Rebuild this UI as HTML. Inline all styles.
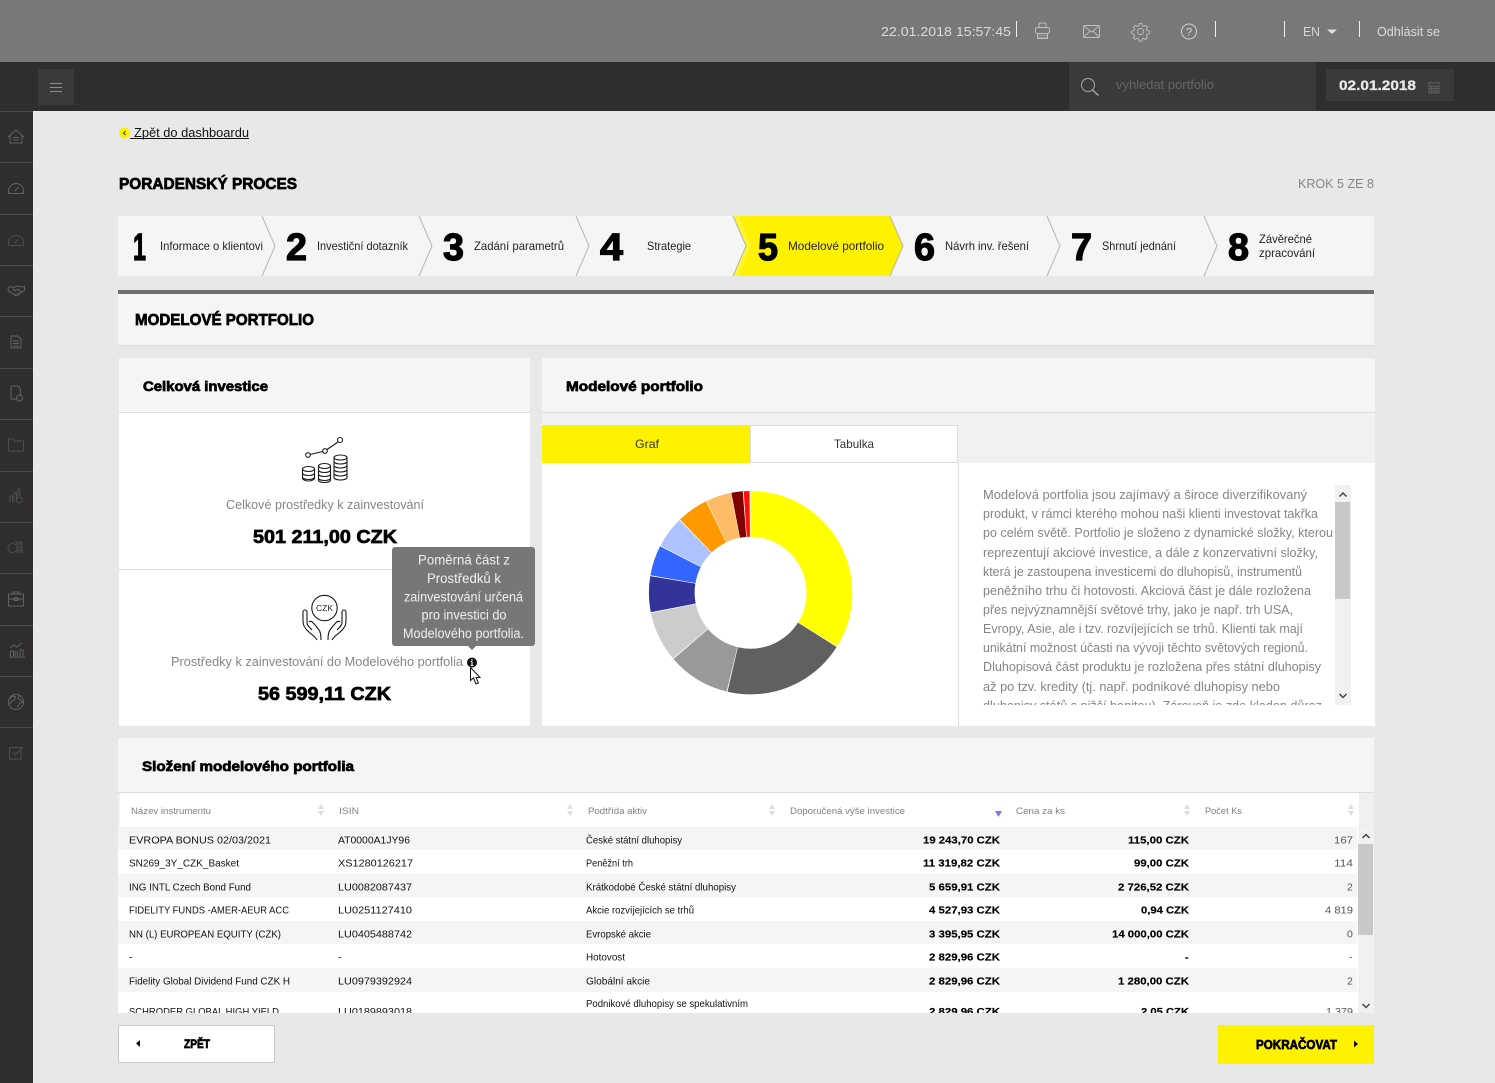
<!DOCTYPE html>
<html lang="cs"><head><meta charset="utf-8"><title>Modelové portfolio</title>
<style>
html,body{margin:0;padding:0;width:1495px;height:1083px;overflow:hidden;background:#e8e8e8}
svg{position:absolute;left:0;top:0;display:block}
text{font-family:"Liberation Sans",sans-serif;white-space:pre}
.h{font-weight:700;fill:#000;stroke:#000;stroke-width:.7}
.n{font-weight:700;fill:#000;font-size:38px;stroke:#000;stroke-width:1.2}
.l{font-size:12px;fill:#222}
.g{font-size:13px;fill:#858585}
.t{font-size:10.5px;fill:#111}
.b{font-size:10.5px;font-weight:700;fill:#000;stroke:#000;stroke-width:.15}
.q{font-size:10.5px;fill:#555}
.th{font-size:9.5px;fill:#808080}
.tt{font-size:13.5px;fill:#f0f0f0;text-anchor:middle}
.ic{fill:none;stroke:#636361;stroke-width:1}
.ic2{fill:none;stroke:#4e4e4c;stroke-width:1}
.top{fill:none;stroke:#c0c0c0;stroke-width:1}
.k{fill:none;stroke:#1a1a1a;stroke-width:1.1}
</style></head><body>
<svg width="1495" height="1083" viewBox="0 0 1495 1083" xmlns="http://www.w3.org/2000/svg">
<defs>
<clipPath id="cText"><rect x="975" y="485" width="360" height="220"/></clipPath>
<clipPath id="cTab"><rect x="118" y="827" width="1240" height="186"/></clipPath>
</defs>
<rect width="1495" height="1083" fill="#e8e8e8"/>
<!-- top -->
<rect width="1495" height="62" fill="#787878"/>
<rect y="62" width="1495" height="49" fill="#2f2e2c"/>
<rect y="111" width="33" height="972" fill="#2f2e2c"/>
<rect x="38" y="69" width="36" height="36" fill="#3a3a38"/>
<path d="M50 83.500h12M50 87.500h12M50 91.500h12" stroke="#8c8c8a" stroke-width="1"/>
<rect x="1069" y="62" width="247" height="49" fill="#3a3a38"/>
<rect x="1326" y="69" width="128" height="32" fill="#3a3a38"/>
<text x="881" y="36" font-size="13" fill="#dcdcdc" textLength="130" lengthAdjust="spacingAndGlyphs">22.01.2018 15:57:45</text>
<path d="M1016.500 21v16M1215.500 21v16M1284.500 21v16M1359.500 21v16" stroke="#eee" stroke-width="1"/>
<g class="top">
<path d="M1039 28v-3.500a1.500 1.500 0 0 1 1.500-1.500h4a1.500 1.500 0 0 1 1.500 1.500V28"/>
<rect x="1035.500" y="27.500" width="14" height="6" rx="2"/>
<path d="M1037.500 33.500v5h10v-5"/>
<path d="M1038 35.500h9M1038 37.500h9" stroke="#9c9c9c"/>
<rect x="1083.500" y="25.500" width="16" height="12" rx="1.500"/><path d="M1084 26l7.500 6 7.500-6M1084 37l6-6M1099 37l-6-6"/>
<g transform="translate(1140.500 31.500) scale(.88) translate(-1140.500 -31.500)"><circle cx="1140.500" cy="31.500" r="3.500"/><path d="M1139 22.500h3l.5 2.500 1.800.8 2-1.300 2.200 2.200-1.300 2 .8 1.800 2.500.5v3l-2.500.5-.8 1.800 1.300 2-2.200 2.200-2-1.300-1.800.8-.5 2.500h-3l-.5-2.500-1.800-.8-2 1.300-2.200-2.200 1.300-2-.8-1.800-2.500-.5v-3l2.500-.5.8-1.800-1.300-2 2.200-2.200 2 1.300 1.800-.8z"/></g>
<circle cx="1189" cy="31.500" r="7.500" stroke="#d4d4d4"/>
</g>
<text x="1189" y="35.500" font-size="11" fill="#d8d8d8" text-anchor="middle">?</text>
<text x="1303" y="36" font-size="13" fill="#d4d4d4" textLength="17" lengthAdjust="spacingAndGlyphs">EN</text>
<path d="M1327 29.500h10l-5 4.500z" fill="#e0e0e0"/>
<text x="1377" y="36" font-size="13" fill="#dcdcdc" textLength="63" lengthAdjust="spacingAndGlyphs">Odhlásit se</text>
<circle cx="1088" cy="85" r="6.500" fill="none" stroke="#a8a8a8" stroke-width="1"/><path d="M1092.500 90l6 5.500" stroke="#a8a8a8" stroke-width="1.500"/>
<text x="1116" y="89" font-size="13" fill="#676765" textLength="98" lengthAdjust="spacingAndGlyphs">vyhledat portfolio</text>
<text x="1339" y="90" font-size="13.500" font-weight="700" fill="#e8e8e8" stroke="#e8e8e8" stroke-width=".3" textLength="77" lengthAdjust="spacingAndGlyphs">02.01.2018</text>
<path d="M1429 83h10v10h-10zM1429 86h10M1431 81.500v2M1437 81.500v2M1431.500 86v7M1434 86v7M1436.500 86v7M1429 88.500h10M1429 91h10" stroke="#5e5e5c" stroke-width="1" fill="none"/>
<!-- side separators -->
<path d="M0 111.500h33M0 162.500h33M0 214.500h33M0 265.500h33M0 316.500h33M0 368.500h33M0 419.500h33M0 471.500h33M0 522.500h33M0 573.500h33M0 625.500h33M0 676.500h33M0 727.500h33" stroke="#4a4a48" stroke-width="1"/>
<g class="ic">
<path d="M8 137l8-7 8 7M10 135.500v7.500h12v-7.500M13 137.500h6M13 140h6"/>
<path d="M8.500 193v-2a7.500 7.500 0 0 1 15 0v2a1 1 0 0 1-1 .5h-13a1 1 0 0 1-1-.5zM14.500 191l4-3.500"/>
<path d="M8 288l3-1.500 3 1 2-1 2.500-.5 3 1 3-.5 0 4-3 1.500-4 3.500-2 0-4-3-3-1.500zM13 288.500l2 2.500 3-2 4 4M14 294l2 1.500M17 293l2 1.500"/>
<path d="M11 336h7l3 3v9H11zM13 341h6M13 343.500h6M13 346h6"/>
<path d="M11 386h7l2.500 3v6M17 399H11V386"/><circle cx="19.500" cy="398" r="3"/>
<rect x="8.500" y="594" width="15" height="12" rx="1"/><path d="M8.500 599h15M13 594v-2h6v2"/><rect x="14" y="598" width="4" height="2.500"/>
<path d="M9 657h16M10.500 656v-5h3v5M15 656v-4h2.500v4M20 656v-6h3v6M10 648l4-3 3 2 5-4"/>
<circle cx="16" cy="702" r="7.500"/><path d="M9.500 699l3-3 3 1-1 3-3 1-1 3M19 695.500l-1 3 3 1.500 1.500 2-3 1-1 3-1.500 1"/>
</g>
<g class="ic2">
<path d="M8.500 245v-2a7.500 7.500 0 0 1 15 0v2a1 1 0 0 1-1 .5h-13a1 1 0 0 1-1-.5zM14.500 243l4-3.500"/>
<path d="M8.500 439h5l1.500 2h8.500v10h-15z"/>
<path d="M10 502v-6h2.500v6M14 502v-9h2.500v9M18 496v-7h2v7"/><circle cx="19.500" cy="500" r="3"/>
<circle cx="12.500" cy="548" r="4.500"/><path d="M14 542h8v10h-6M16 544h6M17 547h5M17 550h5"/>
<path d="M9.500 747.500h11.500v11.500H9.500zM13 752l2.500 3 7.500-8"/>
</g>
<!-- back -->
<circle cx="124.500" cy="133" r="5.500" fill="#fff200"/><path d="M125.500 131l-2 2 2 2" fill="none" stroke="#333" stroke-width="1"/>
<text x="134" y="137" font-size="13" fill="#111" textLength="115" lengthAdjust="spacingAndGlyphs">Zpět do dashboardu</text>
<path d="M130 138.500h119" stroke="#111" stroke-width="1"/>
<text x="119" y="189" class="h" font-size="16" textLength="178" lengthAdjust="spacingAndGlyphs">PORADENSKÝ PROCES</text>
<text x="1298" y="188" font-size="13" fill="#858585" textLength="76" lengthAdjust="spacingAndGlyphs">KROK 5 ZE 8</text>
<!-- steps -->
<rect x="118" y="216" width="1256" height="60" fill="#f5f5f5"/>
<path d="M733 216h157l13 30-13 30H733l13-30z" fill="#fff200"/>
<path d="M733 216h6l12 30-12 30h-6l13-30z" fill="#fff430"/>
<g fill="none" stroke="#b5b5b5" stroke-width="1">
<path d="M262 216l13 30-13 30M419 216l13 30-13 30M576 216l13 30-13 30M733 216l13 30-13 30M890 216l13 30-13 30M1047 216l13 30-13 30M1204 216l13 30-13 30"/>
</g>
<text x="133" y="260" class="n" textLength="13" lengthAdjust="spacingAndGlyphs">1</text>
<text x="286" y="260" class="n" textLength="21" lengthAdjust="spacingAndGlyphs">2</text>
<text x="443" y="260" class="n" textLength="21" lengthAdjust="spacingAndGlyphs">3</text>
<text x="600" y="260" class="n" textLength="23" lengthAdjust="spacingAndGlyphs">4</text>
<text x="758" y="260" class="n" textLength="20" lengthAdjust="spacingAndGlyphs">5</text>
<text x="914" y="260" class="n" textLength="21" lengthAdjust="spacingAndGlyphs">6</text>
<text x="1071" y="260" class="n" textLength="21" lengthAdjust="spacingAndGlyphs">7</text>
<text x="1228" y="260" class="n" textLength="21" lengthAdjust="spacingAndGlyphs">8</text>
<text x="160" y="250" class="l" textLength="103" lengthAdjust="spacingAndGlyphs">Informace o klientovi</text>
<text x="317" y="250" class="l" textLength="91" lengthAdjust="spacingAndGlyphs">Investiční dotazník</text>
<text x="474" y="250" class="l" textLength="90" lengthAdjust="spacingAndGlyphs">Zadání parametrů</text>
<text x="647" y="250" class="l" textLength="44" lengthAdjust="spacingAndGlyphs">Strategie</text>
<text x="788" y="250" class="l" textLength="96" lengthAdjust="spacingAndGlyphs">Modelové portfolio</text>
<text x="945" y="250" class="l" textLength="84" lengthAdjust="spacingAndGlyphs">Návrh inv. řešení</text>
<text x="1102" y="250" class="l" textLength="74" lengthAdjust="spacingAndGlyphs">Shrnutí jednání</text>
<text x="1259" y="243" class="l" textLength="53" lengthAdjust="spacingAndGlyphs">Závěrečné</text>
<text x="1259" y="257" class="l" textLength="56" lengthAdjust="spacingAndGlyphs">zpracování</text>
<!-- section -->
<rect x="118" y="290" width="1256" height="4" fill="#6f6f6f"/>
<rect x="118" y="294" width="1256" height="51" fill="#f5f5f5"/>
<rect x="118" y="345" width="1256" height="1" fill="#dcdcdc"/>
<text x="135" y="325" class="h" font-size="16" textLength="179" lengthAdjust="spacingAndGlyphs">MODELOVÉ PORTFOLIO</text>
<!-- left panel -->
<rect x="119" y="358" width="411" height="368" fill="#fff"/>
<rect x="119" y="358" width="411" height="54" fill="#f5f5f5"/>
<rect x="119" y="412" width="411" height="1" fill="#dcdcdc"/>
<text x="143" y="391" class="h" font-size="13.500" textLength="125" lengthAdjust="spacingAndGlyphs">Celková investice</text>
<rect x="119" y="569" width="411" height="1" fill="#dcdcdc"/>
<!-- coins icon -->
<g class="k">
<path d="M310 454.500l13-3M327 449.500l11-7.500"/>
<circle cx="308" cy="455" r="2.300"/><circle cx="325" cy="451" r="2.300"/><circle cx="340" cy="440" r="2.500"/>
<ellipse cx="308.500" cy="469" rx="6" ry="2.500"/><path d="M302.500 469v9c0 1.500 2.500 3 6 3s6-1.500 6-3v-9M302.500 473c0 1.500 2.500 2.500 6 2.500s6-1 6-2.500M302.500 477c0 1.500 2.500 2.500 6 2.500s6-1 6-2.500"/>
<ellipse cx="324.500" cy="466" rx="6" ry="2.500"/><path d="M318.500 466v14c0 1.500 2.500 2.500 6 2.500s6-1 6-2.500v-14M318.500 470c0 1.500 2.500 2.500 6 2.500s6-1 6-2.500M318.500 474c0 1.500 2.500 2.500 6 2.500s6-1 6-2.500M318.500 478c0 1.500 2.500 2.500 6 2.500s6-1 6-2.500"/>
<ellipse cx="340.500" cy="457.500" rx="6.500" ry="2.500"/><path d="M334 457.500v20c0 1.500 3 2.500 6.500 2.500s6.500-1 6.500-2.500v-20M334 461.500c0 1.500 3 2.500 6.500 2.500s6.500-1 6.500-2.500M334 465.500c0 1.500 3 2.500 6.500 2.500s6.500-1 6.500-2.500M334 469.500c0 1.500 3 2.500 6.500 2.500s6.500-1 6.500-2.500M334 473.500c0 1.500 3 2.500 6.500 2.500s6.500-1 6.500-2.500"/>
</g>
<text x="226" y="509" class="g" textLength="198" lengthAdjust="spacingAndGlyphs">Celkové prostředky k zainvestování</text>
<text x="253" y="543" class="h" font-size="18.500" textLength="144" lengthAdjust="spacingAndGlyphs">501 211,00 CZK</text>
<!-- hands icon -->
<g class="k">
<circle cx="324.500" cy="608" r="12.700"/>
<path id="hand" d="M317 640C314 635 309 633 306 629C303.500 626 303 624 303 620V612a2 2 0 0 1 4 0V623C307 625 309 627 312 630M309 622C312 620 313 623 316 626L319 630C320.500 632 321 635 321 640"/>
<path transform="translate(649 0) scale(-1 1)" d="M317 640C314 635 309 633 306 629C303.500 626 303 624 303 620V612a2 2 0 0 1 4 0V623C307 625 309 627 312 630M309 622C312 620 313 623 316 626L319 630C320.500 632 321 635 321 640"/>
</g>
<text x="324.500" y="611" font-size="8.500" fill="#222" text-anchor="middle">CZK</text>
<text x="171" y="666" class="g" textLength="292" lengthAdjust="spacingAndGlyphs">Prostředky k zainvestování do Modelového portfolia</text>
<text x="258" y="700" class="h" font-size="18.500" textLength="133" lengthAdjust="spacingAndGlyphs">56 599,11 CZK</text>
<!-- right panel -->
<rect x="542" y="358" width="833" height="368" fill="#fff"/>
<rect x="542" y="358" width="833" height="105" fill="#f1f1f1"/>
<rect x="542" y="358" width="833" height="54" fill="#f5f5f5"/>
<rect x="542" y="412" width="833" height="1" fill="#dcdcdc"/>
<text x="566" y="391" class="h" font-size="13.500" textLength="137" lengthAdjust="spacingAndGlyphs">Modelové portfolio</text>
<rect x="542" y="425" width="208" height="38" fill="#fff200"/>
<rect x="750.500" y="425.500" width="207" height="37" fill="#fff" stroke="#dcdcdc"/>
<rect x="542" y="463" width="833" height="263" fill="#fff"/>
<text x="635" y="448" font-size="12" fill="#333" textLength="24" lengthAdjust="spacingAndGlyphs">Graf</text>
<text x="834" y="448" font-size="12" fill="#333" textLength="40" lengthAdjust="spacingAndGlyphs">Tabulka</text>
<rect x="958" y="463" width="1" height="263" fill="#dcdcdc"/>
<!-- donut -->
<g transform="translate(.6 .7) rotate(-90 750 592)" fill="none" stroke-width="45.700">
<circle cx="750" cy="592" r="78.850" pathLength="360" stroke="#ffff00" stroke-dasharray="122 360"/>
<circle cx="750" cy="592" r="78.850" pathLength="360" stroke="#606060" stroke-dasharray="71 360" stroke-dashoffset="-122.400"/>
<circle cx="750" cy="592" r="78.850" pathLength="360" stroke="#999999" stroke-dasharray="35.700 360" stroke-dashoffset="-193.900"/>
<circle cx="750" cy="592" r="78.850" pathLength="360" stroke="#cccccc" stroke-dasharray="28.600 360" stroke-dashoffset="-230.100"/>
<circle cx="750" cy="592" r="78.850" pathLength="360" stroke="#333399" stroke-dasharray="20.500 360" stroke-dashoffset="-259.200"/>
<circle cx="750" cy="592" r="78.850" pathLength="360" stroke="#3366ff" stroke-dasharray="17.300 360" stroke-dashoffset="-280.200"/>
<circle cx="750" cy="592" r="78.850" pathLength="360" stroke="#adc2ff" stroke-dasharray="17.900 360" stroke-dashoffset="-298"/>
<circle cx="750" cy="592" r="78.850" pathLength="360" stroke="#ff9900" stroke-dasharray="18 360" stroke-dashoffset="-316.400"/>
<circle cx="750" cy="592" r="78.850" pathLength="360" stroke="#ffbb66" stroke-dasharray="14.300 360" stroke-dashoffset="-334.800"/>
<circle cx="750" cy="592" r="78.850" pathLength="360" stroke="#800000" stroke-dasharray="6.500 360" stroke-dashoffset="-349.500"/>
<circle cx="750" cy="592" r="78.850" pathLength="360" stroke="#ff1010" stroke-dasharray="3.300 360" stroke-dashoffset="-356.500"/>
</g>
<!-- text block -->
<g clip-path="url(#cText)" class="g">
<text x="983" y="499" textLength="324" lengthAdjust="spacingAndGlyphs">Modelová portfolia jsou zajímavý a široce diverzifikovaný</text>
<text x="983" y="518" textLength="335" lengthAdjust="spacingAndGlyphs">produkt, v rámci kterého mohou naši klienti investovat takřka</text>
<text x="983" y="537" textLength="350" lengthAdjust="spacingAndGlyphs">po celém světě. Portfolio je složeno z dynamické složky, kterou</text>
<text x="983" y="557" textLength="335" lengthAdjust="spacingAndGlyphs">reprezentují akciové investice, a dále z konzervativní složky,</text>
<text x="983" y="576" textLength="319" lengthAdjust="spacingAndGlyphs">která je zastoupena investicemi do dluhopisů, instrumentů</text>
<text x="983" y="595" textLength="328" lengthAdjust="spacingAndGlyphs">peněžního trhu či hotovosti. Akciová část je dále rozložena</text>
<text x="983" y="614" textLength="310" lengthAdjust="spacingAndGlyphs">přes nejvýznamnější světové trhy, jako je např. trh USA,</text>
<text x="983" y="633" textLength="320" lengthAdjust="spacingAndGlyphs">Evropy, Asie, ale i tzv. rozvíjejících se trhů. Klienti tak mají</text>
<text x="983" y="652" textLength="325" lengthAdjust="spacingAndGlyphs">unikátní možnost účasti na vývoji těchto světových regionů.</text>
<text x="983" y="671" textLength="338" lengthAdjust="spacingAndGlyphs">Dluhopisová část produktu je rozložena přes státní dluhopisy</text>
<text x="983" y="691" textLength="297" lengthAdjust="spacingAndGlyphs">až po tzv. kredity (tj. např. podnikové dluhopisy nebo</text>
<text x="983" y="710" textLength="339" lengthAdjust="spacingAndGlyphs">dluhopisy států s nižší bonitou). Zároveň je zde kladen důraz</text>
</g>
<rect x="1335" y="485" width="16" height="220" fill="#f1f1f1"/>
<rect x="1335" y="502" width="15" height="97" fill="#c8c8c8"/>
<path d="M1339.500 496.500l3.500-3.500 3.500 3.500M1339.500 694l3.500 3.500 3.500-3.500" fill="none" stroke="#444" stroke-width="1.500"/>
<!-- table -->
<rect x="118" y="738" width="1256" height="54" fill="#f5f5f5"/>
<rect x="118" y="792" width="1256" height="1" fill="#dcdcdc"/>
<rect x="118" y="793" width="1256" height="220" fill="#fff"/>
<rect x="118" y="793" width="2" height="34" fill="#f1f1f1"/>
<rect x="1359" y="793" width="15" height="34" fill="#efefef"/>
<text x="142" y="771" class="h" font-size="13.500" textLength="212" lengthAdjust="spacingAndGlyphs">Složení modelového portfolia</text>
<text x="131" y="814" class="th" textLength="80" lengthAdjust="spacingAndGlyphs">Název instrumentu</text>
<text x="339" y="814" class="th" textLength="20" lengthAdjust="spacingAndGlyphs">ISIN</text>
<text x="588" y="814" class="th" textLength="59" lengthAdjust="spacingAndGlyphs">Podtřída aktiv</text>
<text x="790" y="814" class="th" textLength="115" lengthAdjust="spacingAndGlyphs">Doporučená výše investice</text>
<text x="1016" y="814" class="th" textLength="49" lengthAdjust="spacingAndGlyphs">Cena za ks</text>
<text x="1205" y="814" class="th" textLength="37" lengthAdjust="spacingAndGlyphs">Počet Ks</text>
<g fill="#dedede">
<path d="M318 809l3-5 3 5zM318 811l3 5 3-5zM567 809l3-5 3 5zM567 811l3 5 3-5zM769 809l3-5 3 5zM769 811l3 5 3-5zM1184 809l3-5 3 5zM1184 811l3 5 3-5zM1348 809l3-5 3 5zM1348 811l3 5 3-5z"/>
</g>
<path d="M995 811h7l-3.500 6z" fill="#7b7be0"/>
<g clip-path="url(#cTab)">
<rect x="118" y="827" width="1239" height="23" fill="#f5f5f5"/>
<rect x="118" y="874" width="1239" height="23" fill="#f5f5f5"/>
<rect x="118" y="921" width="1239" height="23" fill="#f5f5f5"/>
<rect x="118" y="968" width="1239" height="24" fill="#f5f5f5"/>
<g class="t">
<text x="129" y="843.500" textLength="142" lengthAdjust="spacingAndGlyphs">EVROPA BONUS 02/03/2021</text>
<text x="338" y="843.500" textLength="72" lengthAdjust="spacingAndGlyphs">AT0000A1JY96</text>
<text x="586" y="843.500" textLength="96" lengthAdjust="spacingAndGlyphs">České státní dluhopisy</text>
<text x="129" y="866.500" textLength="110" lengthAdjust="spacingAndGlyphs">SN269_3Y_CZK_Basket</text>
<text x="338" y="866.500" textLength="75" lengthAdjust="spacingAndGlyphs">XS1280126217</text>
<text x="586" y="866.500" textLength="47" lengthAdjust="spacingAndGlyphs">Peněžní trh</text>
<text x="129" y="890.500" textLength="122" lengthAdjust="spacingAndGlyphs">ING INTL Czech Bond Fund</text>
<text x="338" y="890.500" textLength="74" lengthAdjust="spacingAndGlyphs">LU0082087437</text>
<text x="586" y="890.500" textLength="150" lengthAdjust="spacingAndGlyphs">Krátkodobé České státní dluhopisy</text>
<text x="129" y="913.500" textLength="160" lengthAdjust="spacingAndGlyphs">FIDELITY FUNDS -AMER-AEUR ACC</text>
<text x="338" y="913.500" textLength="74" lengthAdjust="spacingAndGlyphs">LU0251127410</text>
<text x="586" y="913.500" textLength="108" lengthAdjust="spacingAndGlyphs">Akcie rozvíjejících se trhů</text>
<text x="129" y="937.500" textLength="152" lengthAdjust="spacingAndGlyphs">NN (L) EUROPEAN EQUITY (CZK)</text>
<text x="338" y="937.500" textLength="74" lengthAdjust="spacingAndGlyphs">LU0405488742</text>
<text x="586" y="937.500" textLength="65" lengthAdjust="spacingAndGlyphs">Evropské akcie</text>
<text x="129" y="960.500">-</text>
<text x="338" y="960.500">-</text>
<text x="586" y="960.500" textLength="39" lengthAdjust="spacingAndGlyphs">Hotovost</text>
<text x="129" y="984.500" textLength="161" lengthAdjust="spacingAndGlyphs">Fidelity Global Dividend Fund CZK H</text>
<text x="338" y="984.500" textLength="74" lengthAdjust="spacingAndGlyphs">LU0979392924</text>
<text x="586" y="984.500" textLength="64" lengthAdjust="spacingAndGlyphs">Globální akcie</text>
<text x="129" y="1015" textLength="150" lengthAdjust="spacingAndGlyphs">SCHRODER GLOBAL HIGH YIELD</text>
<text x="338" y="1015" textLength="74" lengthAdjust="spacingAndGlyphs">LU0189893018</text>
<text x="586" y="1007" textLength="162" lengthAdjust="spacingAndGlyphs">Podnikové dluhopisy se spekulativním</text>
</g>
<g class="b">
<text x="923" y="843.500" textLength="77" lengthAdjust="spacingAndGlyphs">19 243,70 CZK</text>
<text x="923" y="866.500" textLength="77" lengthAdjust="spacingAndGlyphs">11 319,82 CZK</text>
<text x="929" y="890.500" textLength="71" lengthAdjust="spacingAndGlyphs">5 659,91 CZK</text>
<text x="929" y="913.500" textLength="71" lengthAdjust="spacingAndGlyphs">4 527,93 CZK</text>
<text x="929" y="937.500" textLength="71" lengthAdjust="spacingAndGlyphs">3 395,95 CZK</text>
<text x="929" y="960.500" textLength="71" lengthAdjust="spacingAndGlyphs">2 829,96 CZK</text>
<text x="929" y="984.500" textLength="71" lengthAdjust="spacingAndGlyphs">2 829,96 CZK</text>
<text x="929" y="1015" textLength="71" lengthAdjust="spacingAndGlyphs">2 829,96 CZK</text>
<text x="1128" y="843.500" textLength="61" lengthAdjust="spacingAndGlyphs">115,00 CZK</text>
<text x="1134" y="866.500" textLength="55" lengthAdjust="spacingAndGlyphs">99,00 CZK</text>
<text x="1118" y="890.500" textLength="71" lengthAdjust="spacingAndGlyphs">2 726,52 CZK</text>
<text x="1141" y="913.500" textLength="48" lengthAdjust="spacingAndGlyphs">0,94 CZK</text>
<text x="1112" y="937.500" textLength="77" lengthAdjust="spacingAndGlyphs">14 000,00 CZK</text>
<text x="1185" y="960.500">-</text>
<text x="1118" y="984.500" textLength="71" lengthAdjust="spacingAndGlyphs">1 280,00 CZK</text>
<text x="1141" y="1015" textLength="48" lengthAdjust="spacingAndGlyphs">2,05 CZK</text>
</g>
<g class="q">
<text x="1334" y="843.500" textLength="19" lengthAdjust="spacingAndGlyphs">167</text>
<text x="1334" y="866.500" textLength="19" lengthAdjust="spacingAndGlyphs">114</text>
<text x="1347" y="890.500">2</text>
<text x="1325" y="913.500" textLength="28" lengthAdjust="spacingAndGlyphs">4 819</text>
<text x="1347" y="937.500">0</text>
<text x="1349" y="960.500">-</text>
<text x="1347" y="984.500">2</text>
<text x="1326" y="1015" textLength="27" lengthAdjust="spacingAndGlyphs">1 379</text>
</g>
</g>
<rect x="1358" y="827" width="16" height="186" fill="#f1f1f1"/>
<rect x="1358" y="844" width="15" height="91" fill="#c8c8c8"/>
<path d="M1362.500 838l3.500-3.500 3.500 3.500M1362.500 1004l3.500 3.500 3.500-3.500" fill="none" stroke="#444" stroke-width="1.500"/>
<!-- buttons -->
<rect x="118.500" y="1025.500" width="156" height="37" fill="#fff" stroke="#c8c8c8"/>
<path d="M140 1040v7l-4-3.500z" fill="#111"/>
<text x="184" y="1048" class="h" font-size="12" stroke-width=".4" textLength="26" lengthAdjust="spacingAndGlyphs">ZPĚT</text>
<rect x="1218" y="1025" width="156" height="39" fill="#fff200"/>
<text x="1256" y="1049" class="h" font-size="12.500" stroke-width=".4" textLength="81" lengthAdjust="spacingAndGlyphs">POKRAČOVAT</text>
<path d="M1354 1040.500v7l4-3.500z" fill="#111"/>
<!-- tooltip -->
<rect x="392" y="547" width="143" height="99" rx="3" fill="#777"/>
<path d="M468 646h8l-4 4z" fill="#777"/>
<text x="464" y="564.500" class="tt" textLength="92" lengthAdjust="spacingAndGlyphs">Poměrná část z</text>
<text x="464" y="583" class="tt" textLength="74" lengthAdjust="spacingAndGlyphs">Prostředků k</text>
<text x="463.500" y="601.500" class="tt" textLength="119" lengthAdjust="spacingAndGlyphs">zainvestování určená</text>
<text x="464" y="619.500" class="tt" textLength="85" lengthAdjust="spacingAndGlyphs">pro investici do</text>
<text x="463.500" y="638" class="tt" textLength="121" lengthAdjust="spacingAndGlyphs">Modelového portfolia.</text>
<circle cx="472" cy="662.500" r="5" fill="#111"/>
<path d="M472 659v1.500M472 661.500v3.500M470.800 661.500h1.200M470.800 665.500h2.500" stroke="#fff" stroke-width="1.100"/>
<path d="M470.500 667.500v13l3-2.500 2.500 6 2.500-1-2.500-5.500h4z" fill="#fff" stroke="#111" stroke-width="1"/>
</svg>
</body></html>
